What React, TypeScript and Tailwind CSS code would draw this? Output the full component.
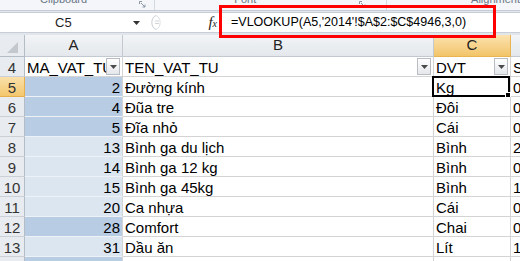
import React from "react";

type Row = { n: number; a: string; b: string; c: string; d: string; dark?: boolean; sel?: boolean };

const rows: Row[] = [
  { n: 5, a: "2", b: "Đường kính", c: "Kg", d: "0", dark: true, sel: true },
  { n: 6, a: "4", b: "Đũa tre", c: "Đôi", d: "0", dark: true },
  { n: 7, a: "5", b: "Đĩa nhỏ", c: "Cái", d: "0", dark: true },
  { n: 8, a: "13", b: "Bình ga du lịch", c: "Bình", d: "2" },
  { n: 9, a: "14", b: "Bình ga 12 kg", c: "Bình", d: "0" },
  { n: 10, a: "15", b: "Bình ga 45kg", c: "Bình", d: "1" },
  { n: 11, a: "20", b: "Ca nhựa", c: "Cái", d: "0" },
  { n: 12, a: "28", b: "Comfort", c: "Chai", d: "0", dark: true },
  { n: 13, a: "31", b: "Dầu ăn", c: "Lít", d: "1" },
];

function Launcher() {
  return (
    <svg width="7" height="7" viewBox="0 0 7 7" className="mt-[1px]">
      <path d="M0.5 0.5H3M0.5 0.5V3" stroke="#8a95a3" fill="none" />
      <path d="M2 2L6 6M6 3.5V6H3.5" stroke="#8a95a3" fill="none" />
    </svg>
  );
}

function Ribbon() {
  return (
    <div className="flex h-[11px] border-b border-[#c6cdd6] bg-[#f4f6f9] text-[11px] leading-[11px] text-[#6a7585] overflow-hidden">
      <div className="flex w-[155px] items-start">
        <span className="ml-[40px] -mt-[6px]">Clipboard</span>
        <div className="ml-auto mr-[8px]">
          <Launcher />
        </div>
      </div>
      <div className="w-px bg-[#d3d9e1]" />
      <div className="flex w-[232px] items-start">
        <span className="ml-[79px] -mt-[6px]">Font</span>
        <div className="ml-auto mr-[20px]">
          <Launcher />
        </div>
      </div>
      <div className="w-px bg-[#d3d9e1]" />
      <div className="flex flex-1 items-start">
        <span className="ml-[84px] -mt-[6px] whitespace-nowrap">Alignment</span>
      </div>
    </div>
  );
}

function FormulaBar() {
  return (
    <div className="flex h-[21px] border-y border-[#c9ced6] bg-white">
      <div className="flex w-[145px] items-center">
        <span className="ml-[55px] text-[13px] text-[#1e1e1e]">C5</span>
        <svg width="7" height="4" viewBox="0 0 7 4" className="ml-auto mr-[5px]">
          <path d="M0 0H7L3.5 4Z" fill="#333" />
        </svg>
      </div>
      <div className="flex flex-1 items-center">
        <svg width="16" height="17" viewBox="0 0 16 17" className="ml-[3px]">
          <path d="M8 1.5A6.5 7.5 0 0 0 8 15.5" stroke="#c6ccd4" fill="none" />
          <path d="M8 1.5A6.5 7.5 0 0 1 8 15.5" stroke="#dde1e6" fill="none" />
          <path d="M7 7H11M7 9.5H11" stroke="#d0d5dc" />
        </svg>
        <span className="ml-auto mr-[2px] font-['Liberation_Serif',serif] italic text-[15px] leading-none text-[#222]">
          f<span className="text-[10px]">x</span>
        </span>
        <div className="flex h-full w-[301px] items-center border-l border-[#c9ced6] pl-[11px] text-[12.5px] text-black whitespace-nowrap">
          =VLOOKUP(A5,'2014'!$A$2:$C$4946,3,0)
        </div>
      </div>
    </div>
  );
}

function FilterBtn() {
  return (
    <div className="mb-[1px] ml-auto mr-[2px] flex h-[17px] w-[14px] shrink-0 items-center justify-center border border-[#b9bdc3] bg-gradient-to-b from-white to-[#e4e7eb]">
      <svg width="7" height="4" viewBox="0 0 7 4">
        <path d="M0 0H7L3.5 4Z" fill="#4a4a4a" />
      </svg>
    </div>
  );
}

const cell = "flex h-full items-end border-b border-r leading-[17px] overflow-hidden whitespace-nowrap";

function RowHead({ n, sel }: { n: number; sel?: boolean }) {
  return (
    <div
      className={`${cell} w-[25px] justify-center ${
        sel
          ? "bg-gradient-to-b from-[#fae1aa] to-[#f3c66c] border-b-[#e7b04f] border-r-[#e7b04f]"
          : "bg-[#e8ebef] border-b-[#cbd0d6] border-r-[#b4bcc6]"
      } text-[#333]`}
    >
      {n}
    </div>
  );
}

function Grid() {
  return (
    <div className="text-[15px] text-black">
      <div className="flex h-[22px] text-[#222]">
        <div className="flex w-[25px] items-end justify-end border-b border-r border-[#b4bcc6] bg-[#e8ebef] pb-[3px] pr-[6px]">
          <svg width="11" height="11" viewBox="0 0 11 11">
            <path d="M11 0V11H0Z" fill="#c3c8ce" />
          </svg>
        </div>
        <div className="flex w-[98px] items-center justify-center border-b border-r border-[#c3c9d0] bg-gradient-to-b from-[#f2f4f6] to-[#e4e8ec]">A</div>
        <div className="flex w-[311px] items-center justify-center border-b border-r border-[#c3c9d0] bg-gradient-to-b from-[#f2f4f6] to-[#e4e8ec]">B</div>
        <div className="flex w-[77px] items-center justify-center border-b border-r border-[#e9b553] bg-gradient-to-b from-[#fbe3b0] to-[#f2c468]">C</div>
        <div className="flex-1 border-b border-[#c3c9d0] bg-gradient-to-b from-[#f2f4f6] to-[#e4e8ec]" />
      </div>

      <div className="flex h-[20px]">
        <RowHead n={4} />
        <div className={`${cell} w-[98px] border-[#d4d4d4] pl-[2px]`}>
          <span className="overflow-hidden">MA_VAT_TU</span>
          <FilterBtn />
        </div>
        <div className={`${cell} w-[311px] border-[#d4d4d4] pl-[2px]`}>
          <span>TEN_VAT_TU</span>
          <FilterBtn />
        </div>
        <div className={`${cell} w-[77px] border-[#d4d4d4] pl-[2px]`}>
          <span>DVT</span>
          <FilterBtn />
        </div>
        <div className={`${cell} flex-1 border-b-[#d4d4d4] border-r-0 pl-[2px]`}>SL</div>
      </div>

      {rows.map((r) => (
        <div key={r.n} className="flex h-[20px]">
          <RowHead n={r.n} sel={r.sel} />
          <div
            className={`${cell} w-[98px] justify-end pr-[2px] border-b-[#eef2f7] border-r-[#d4d4d4] ${
              r.dark ? "bg-[#b8cce4]" : "bg-[#dce6f1]"
            }`}
          >
            {r.a}
          </div>
          <div className={`${cell} w-[311px] border-[#d4d4d4] pl-[2px]`}>{r.b}</div>
          <div className={`${cell} relative w-[77px] border-[#d4d4d4] pl-[2px] overflow-visible`}>
            {r.c}
            {r.sel && (
              <div className="absolute -left-[2px] -top-[1px] h-[21px] w-[78px] border-2 border-black">
                <div className="absolute -bottom-[3px] -right-[3px] h-[6px] w-[6px] border border-white bg-black" />
              </div>
            )}
          </div>
          <div className={`${cell} flex-1 border-b-[#d4d4d4] border-r-0 pl-[2px]`}>{r.d}</div>
        </div>
      ))}

      <div className="flex h-[20px]">
        <RowHead n={14} />
        <div className={`${cell} w-[98px] border-b-[#eef2f7] border-r-[#d4d4d4] bg-[#b8cce4]`} />
        <div className={`${cell} w-[311px] border-[#d4d4d4]`} />
        <div className={`${cell} w-[77px] border-[#d4d4d4]`} />
        <div className={`${cell} flex-1 border-b-[#d4d4d4] border-r-0`} />
      </div>
    </div>
  );
}

export default function App() {
  return (
    <div className="relative h-[261px] w-[520px] overflow-hidden bg-white font-['Liberation_Sans',Arial,sans-serif]">
      <Ribbon />
      <div className="h-px bg-[#e1e6ec]" />
      <FormulaBar />
      <div className="h-[2px] bg-[#e1e6ec]" />
      <Grid />
      <div className="pointer-events-none absolute left-[219px] top-[5px] h-[33px] w-[277px] border-[3px] border-[#ff0000]" />
    </div>
  );
}
